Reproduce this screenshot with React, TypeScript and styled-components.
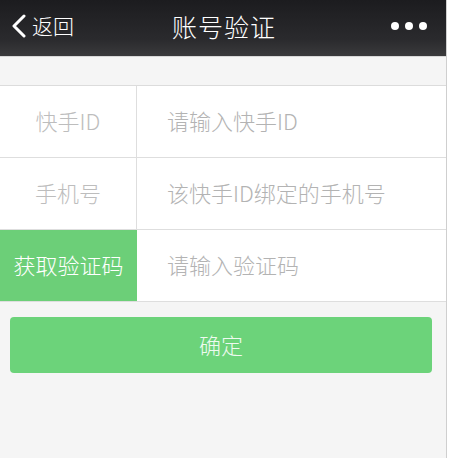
import styled, { createGlobalStyle } from 'styled-components';

const GlobalStyle = createGlobalStyle`
  html, body {
    margin: 0;
    padding: 0;
    background: #ffffff;
    font-family: "Noto Sans CJK SC", "Liberation Sans", sans-serif;
  }
`;

const Screen = styled.div`
  width: 446px;
  height: 458px;
  background-color: #f5f5f5;
  border-right: 1px solid #cfcfcf;
  display: flex;
  flex-direction: column;
  overflow: hidden;
`;

const NavBar = styled.header`
  height: 57px;
  box-sizing: border-box;
  padding-bottom: 5px;
  background: linear-gradient(#1c1c1f, #2a2a2d 70%, #3a3a3c);
  display: grid;
  grid-template-columns: 1fr auto 1fr;
  align-items: center;
  color: #ffffff;
  border-bottom: 1px solid #d8d8d8;
`;

const BackButton = styled.div`
  display: flex;
  align-items: center;
  gap: 5px;
  padding-left: 11px;
  font-size: 21px;
  font-weight: 300;
  line-height: 1;
`;

const Title = styled.h1`
  margin: 0;
  font-size: 25px;
  font-weight: 300;
  letter-spacing: 1px;
  padding-left: 2px;
`;

const MoreDots = styled.div`
  justify-self: end;
  display: flex;
  gap: 6px;
  padding-right: 19px;
`;

const Dot = styled.span`
  width: 8px;
  height: 8px;
  border-radius: 50%;
  background: #ffffff;
`;

const Spacer = styled.div`
  height: 28px;
  border-bottom: 1px solid #dcdcdc;
`;

const Form = styled.div`
  background: #ffffff;
  display: flex;
  flex-direction: column;
`;

const Row = styled.div`
  display: grid;
  grid-template-columns: 137px 1fr;
  height: 71px;
  border-bottom: 1px solid #dedede;
`;

const Label = styled.div<{ $action?: boolean }>`
  display: flex;
  align-items: center;
  justify-content: center;
  padding-bottom: 3px;
  font-size: 22px;
  font-weight: 300;
  color: ${(p) => (p.$action ? '#ffffff' : '#bdbdbd')};
  background: ${(p) => (p.$action ? '#6ccf78' : '#ffffff')};
  border-right: ${(p) => (p.$action ? 'none' : '1px solid #dedede')};
`;

const Field = styled.div`
  display: flex;
  align-items: center;
  padding: 0 0 3px 30px;
  font-size: 22px;
  font-weight: 300;
  color: #b3b3b3;
`;

const Actions = styled.div`
  padding: 15px 14px 0 10px;
`;

const ConfirmButton = styled.button`
  width: 100%;
  height: 56px;
  padding-bottom: 4px;
  border: none;
  border-radius: 4px;
  background-color: #6cd37a;
  color: #eefaf0;
  font-family: inherit;
  font-size: 22px;
  font-weight: 300;
  cursor: pointer;
`;

export default function App() {
  const rows = [
    { label: '快手ID', placeholder: '请输入快手ID' },
    { label: '手机号', placeholder: '该快手ID绑定的手机号' },
    { label: '获取验证码', placeholder: '请输入验证码', action: true },
  ];

  return (
    <>
      <GlobalStyle />
      <Screen>
        <NavBar>
          <BackButton>
            <svg width="16" height="24" viewBox="0 0 16 24">
              <path
                d="M13 2 L3 12 L13 22"
                fill="none"
                stroke="#ffffff"
                strokeWidth="3"
                strokeLinecap="round"
                strokeLinejoin="round"
              />
            </svg>
            <span>返回</span>
          </BackButton>
          <Title>账号验证</Title>
          <MoreDots>
            <Dot />
            <Dot />
            <Dot />
          </MoreDots>
        </NavBar>
        <Spacer />
        <Form>
          {rows.map((row) => (
            <Row key={row.label}>
              <Label $action={row.action}>{row.label}</Label>
              <Field>{row.placeholder}</Field>
            </Row>
          ))}
        </Form>
        <Actions>
          <ConfirmButton>确定</ConfirmButton>
        </Actions>
      </Screen>
    </>
  );
}
